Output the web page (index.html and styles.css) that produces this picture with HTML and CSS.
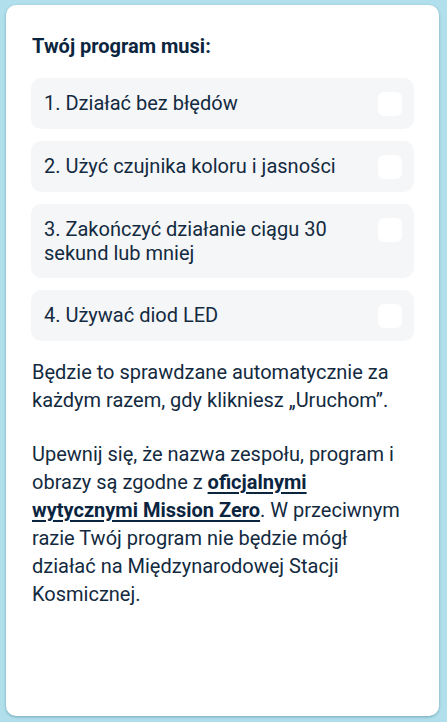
FILE: index.html
```html
<!DOCTYPE html>
<html lang="pl">
<head>
<meta charset="utf-8">
<link rel="stylesheet" href="styles.css">
</head>
<body>
<div class="card">
  <h2 class="title">Twój program musi:</h2>
  <ul class="list">
    <li class="item"><span class="text">1. Działać bez błędów</span><span class="check"></span></li>
    <li class="item"><span class="text">2. Użyć czujnika koloru i jasności</span><span class="check"></span></li>
    <li class="item"><span class="text">3. Zakończyć działanie ciągu 30 sekund lub mniej</span><span class="check"></span></li>
    <li class="item"><span class="text">4. Używać diod LED</span><span class="check"></span></li>
  </ul>
  <p class="para">Będzie to sprawdzane automatycznie za każdym razem, gdy klikniesz „Uruchom”.</p>
  <p class="para">Upewnij się, że nazwa zespołu, program i obrazy są zgodne z <a class="link" href="#">oficjalnymi wytycznymi Mission Zero</a>. W przeciwnym razie Twój program nie będzie mógł działać na Międzynarodowej Stacji Kosmicznej.</p>
</div>
</body>
</html>
```
FILE: styles.css
```css
html, body {
  margin: 0;
  padding: 0;
  background: #b1e0ec;
  height: 100%;
}
body {
  padding: 5px 8px 6px 6px;
  box-sizing: border-box;
  font-family: Roboto, "Noto Sans", sans-serif;
  color: #132a40;
}
.card {
  background: #fff;
  border-radius: 10px;
  height: 100%;
  box-sizing: border-box;
  padding: 30px 25px 20px 25px;
  box-shadow: 0 1px 3px rgba(0, 60, 90, 0.35);
}
.title {
  margin: 0 0 21px 1px;
  font-size: 20px;
  line-height: 22px;
  font-weight: 700;
  color: #0b2540;
}
.list {
  list-style: none;
  margin: 0 0 17px 0;
  padding: 0;
  display: flex;
  flex-direction: column;
  gap: 12px;
}
.item {
  background: #f5f6f8;
  border-radius: 10px;
  display: flex;
  align-items: flex-start;
  justify-content: space-between;
  padding: 13px 12px 13px 13px;
  gap: 16px;
}
.text {
  font-size: 20px;
  line-height: 24px;
}
.check {
  flex: none;
  width: 24px;
  height: 24px;
  margin-top: 1px;
  background: #fff;
  border-radius: 6px;
}
.para {
  margin: 0 0 26px 1px;
  font-size: 20px;
  line-height: 28px;
}
.link {
  color: #0b2540;
  font-weight: 700;
  text-decoration: underline;
  text-decoration-thickness: 2px;
  text-underline-offset: 3px;
}
```
